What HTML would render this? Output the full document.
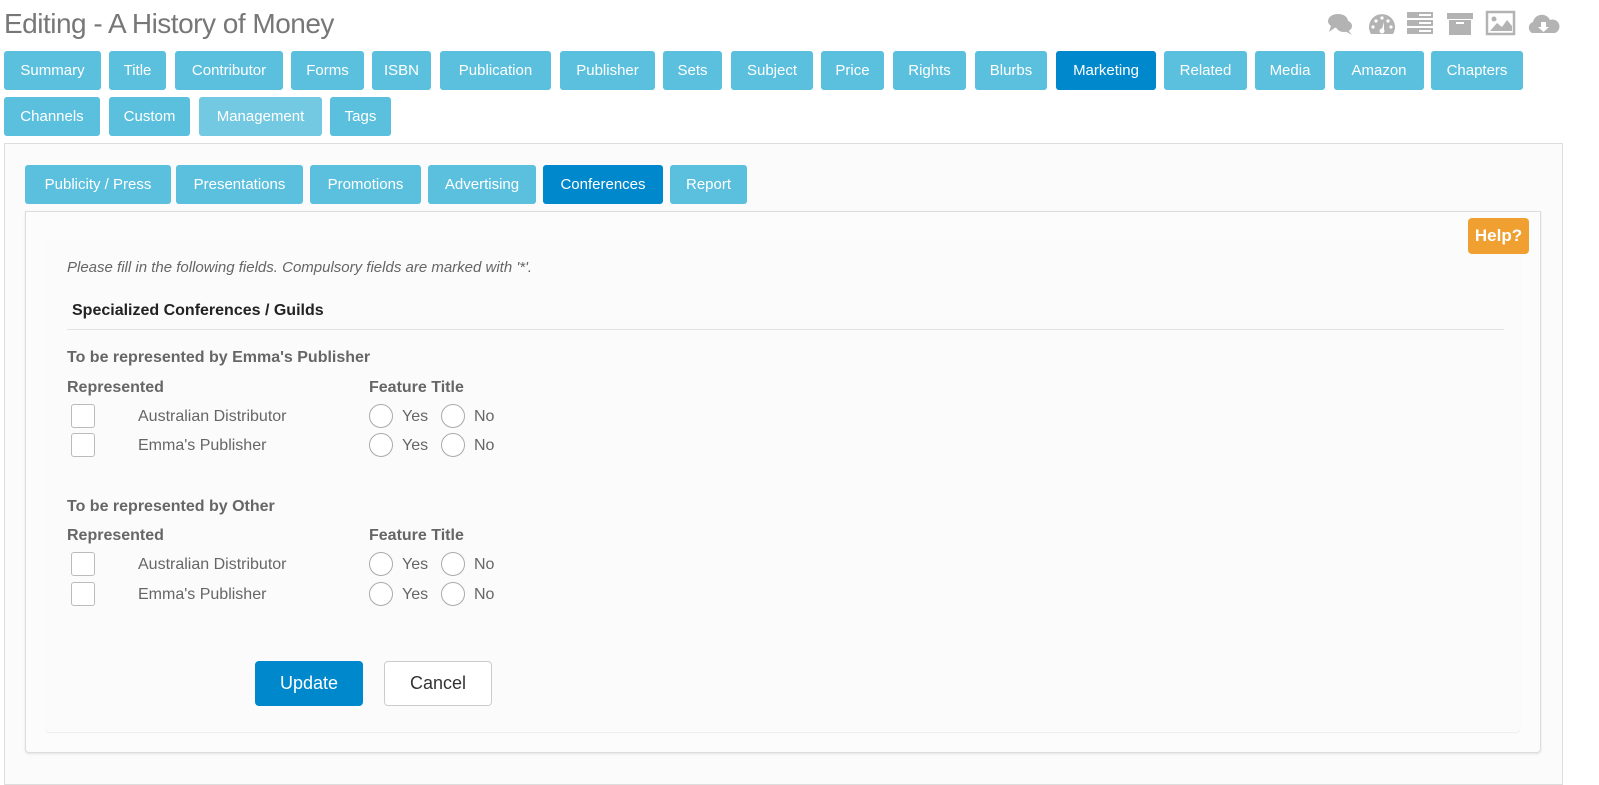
<!DOCTYPE html>
<html><head><meta charset="utf-8"><style>
body{margin:0;width:1599px;height:774px;background:#fff;font-family:"Liberation Sans",Arial,sans-serif;position:relative;overflow:hidden;color:#666}
.a{position:absolute}
.b{position:absolute;height:39px;line-height:39px;background:#5bc0de;color:#fff;font-size:15px;text-align:center;border-radius:3px}
.s{position:absolute;top:165px;height:39px;line-height:39px;background:#5bc0de;color:#fff;font-size:15px;text-align:center;border-radius:3px}
.cb{position:absolute;width:24px;height:24px;border:1px solid #bbb;border-radius:3px;background:#fff;box-sizing:border-box;left:71px}
.rd{position:absolute;width:24px;height:24px;border:1px solid #aaa;border-radius:50%;background:#fff;box-sizing:border-box}
.t{position:absolute;font-size:16px;color:#666}
.h{position:absolute;font-size:16px;font-weight:bold;color:#666}
</style></head><body>
<div class="a" style="left:4px;top:8px;font-size:28px;color:#777;letter-spacing:-0.5px">Editing - A History of Money</div>
<svg class="a" style="left:1325px;top:10px" width="270" height="28" viewBox="0 0 270 28" fill="#b3b3b3">
<ellipse cx="13" cy="11" rx="10" ry="7"/><path d="M6 16 L4 22 L11 17Z"/><ellipse cx="19" cy="16" rx="8" ry="6"/><path d="M23 20 L27 25 L20 21Z"/>
<path d="M46 24 A13 13 0 1 1 68 24 Z"/><circle cx="48" cy="17" r="1.6" fill="#fff"/><circle cx="51" cy="11" r="1.6" fill="#fff"/><circle cx="57" cy="8" r="1.6" fill="#fff"/><circle cx="63" cy="11" r="1.6" fill="#fff"/><circle cx="66" cy="17" r="1.6" fill="#fff"/><path d="M56 22 L59 12 L59 22Z" fill="#fff"/><circle cx="57" cy="21" r="2.5" fill="#fff"/>
<rect x="82" y="2" width="26" height="6"/><rect x="82" y="10" width="26" height="6"/><rect x="82" y="18" width="26" height="6"/><rect x="94" y="4" width="12" height="2" fill="#fff"/><rect x="94" y="12" width="12" height="2" fill="#fff"/><rect x="94" y="20" width="12" height="2" fill="#fff"/>
<rect x="122" y="3" width="26" height="6"/><rect x="124" y="10" width="22" height="15"/><rect x="131" y="12" width="8" height="2" fill="#fff"/>
<rect x="162" y="2" width="27" height="22" fill="none" stroke="#b3b3b3" stroke-width="2.5"/><path d="M165 21 L172 13 L177 17 L182 10 L187 16 L187 21Z"/><circle cx="169" cy="9" r="2.5"/>
<path d="M207 23 A6 6 0 0 1 208 12 A9 9 0 0 1 225 10 A6.5 6.5 0 0 1 230 23 Z"/><path d="M216 12 H221 V17 H224 L218.5 22 L213 17 H216Z" fill="#fff"/>
</svg>
<div class="b" style="left:4px;top:51px;width:97px">Summary</div>
<div class="b" style="left:109px;top:51px;width:57px">Title</div>
<div class="b" style="left:175px;top:51px;width:108px">Contributor</div>
<div class="b" style="left:291px;top:51px;width:73px">Forms</div>
<div class="b" style="left:372px;top:51px;width:59px">ISBN</div>
<div class="b" style="left:440px;top:51px;width:111px">Publication</div>
<div class="b" style="left:560px;top:51px;width:95px">Publisher</div>
<div class="b" style="left:663px;top:51px;width:59px">Sets</div>
<div class="b" style="left:731px;top:51px;width:82px">Subject</div>
<div class="b" style="left:821px;top:51px;width:63px">Price</div>
<div class="b" style="left:893px;top:51px;width:73px">Rights</div>
<div class="b" style="left:975px;top:51px;width:72px">Blurbs</div>
<div class="b" style="left:1056px;top:51px;width:100px;background:#0088cc">Marketing</div>
<div class="b" style="left:1164px;top:51px;width:83px">Related</div>
<div class="b" style="left:1255px;top:51px;width:70px">Media</div>
<div class="b" style="left:1334px;top:51px;width:90px">Amazon</div>
<div class="b" style="left:1431px;top:51px;width:92px">Chapters</div>
<div class="b" style="left:4px;top:97px;width:96px">Channels</div>
<div class="b" style="left:109px;top:97px;width:81px">Custom</div>
<div class="b" style="left:199px;top:97px;width:123px;background:#74c9e2">Management</div>
<div class="b" style="left:330px;top:97px;width:61px">Tags</div>
<div class="a" style="left:4px;top:143px;width:1557px;height:640px;border:1px solid #ddd;background:#fbfbfb"></div>
<div class="s" style="left:25px;width:146px">Publicity / Press</div>
<div class="s" style="left:176px;width:127px">Presentations</div>
<div class="s" style="left:310px;width:111px">Promotions</div>
<div class="s" style="left:428px;width:108px">Advertising</div>
<div class="s" style="left:543px;width:120px;background:#0088cc">Conferences</div>
<div class="s" style="left:670px;width:77px">Report</div>
<div class="a" style="left:25px;top:211px;width:1514px;height:540px;border:1px solid #ddd;border-radius:0 0 4px 4px;background:#fcfcfc;box-shadow:0 1px 2px rgba(0,0,0,.1)"></div>
<div class="a" style="left:45px;top:240px;width:1475px;height:492px;background:#fbfbfb;border-radius:4px;box-shadow:0 1px 1px rgba(0,0,0,.06)"></div>
<div class="a" style="left:1468px;top:218px;width:61px;height:36px;line-height:36px;background:#f0a030;color:#fff;font-weight:bold;font-size:17px;text-align:center;border-radius:4px">Help?</div>
<div class="a" style="left:67px;top:259px;font-size:15px;font-style:italic;color:#666">Please fill in the following fields. Compulsory fields are marked with '*'.</div>
<div class="a" style="left:72px;top:302px;font-size:16px;font-weight:bold;color:#222">Specialized Conferences / Guilds</div>
<div class="a" style="left:67px;top:329px;width:1437px;height:1px;background:#e3e3e3"></div>
<div class="h" style="left:67px;top:349px">To be represented by Emma's Publisher</div>
<div class="h" style="left:67px;top:379px">Represented</div><div class="h" style="left:369px;top:379px">Feature Title</div>
<div class="cb" style="top:404px"></div><div class="t" style="left:138px;top:408px">Australian Distributor</div>
<div class="rd" style="left:369px;top:404px"></div><div class="t" style="left:402px;top:408px">Yes</div><div class="rd" style="left:441px;top:404px"></div><div class="t" style="left:474px;top:408px">No</div>
<div class="cb" style="top:433px"></div><div class="t" style="left:138px;top:437px">Emma's Publisher</div>
<div class="rd" style="left:369px;top:433px"></div><div class="t" style="left:402px;top:437px">Yes</div><div class="rd" style="left:441px;top:433px"></div><div class="t" style="left:474px;top:437px">No</div>
<div class="h" style="left:67px;top:498px">To be represented by Other</div>
<div class="h" style="left:67px;top:527px">Represented</div><div class="h" style="left:369px;top:527px">Feature Title</div>
<div class="cb" style="top:552px"></div><div class="t" style="left:138px;top:556px">Australian Distributor</div>
<div class="rd" style="left:369px;top:552px"></div><div class="t" style="left:402px;top:556px">Yes</div><div class="rd" style="left:441px;top:552px"></div><div class="t" style="left:474px;top:556px">No</div>
<div class="cb" style="top:582px"></div><div class="t" style="left:138px;top:586px">Emma's Publisher</div>
<div class="rd" style="left:369px;top:582px"></div><div class="t" style="left:402px;top:586px">Yes</div><div class="rd" style="left:441px;top:582px"></div><div class="t" style="left:474px;top:586px">No</div>
<div class="a" style="left:255px;top:661px;width:108px;height:45px;line-height:45px;background:#0088cc;color:#fff;font-size:18px;text-align:center;border-radius:4px">Update</div>
<div class="a" style="left:384px;top:661px;width:108px;height:45px;line-height:43px;box-sizing:border-box;border:1px solid #ccc;background:#fff;color:#333;font-size:18px;text-align:center;border-radius:4px">Cancel</div>
</body></html>
